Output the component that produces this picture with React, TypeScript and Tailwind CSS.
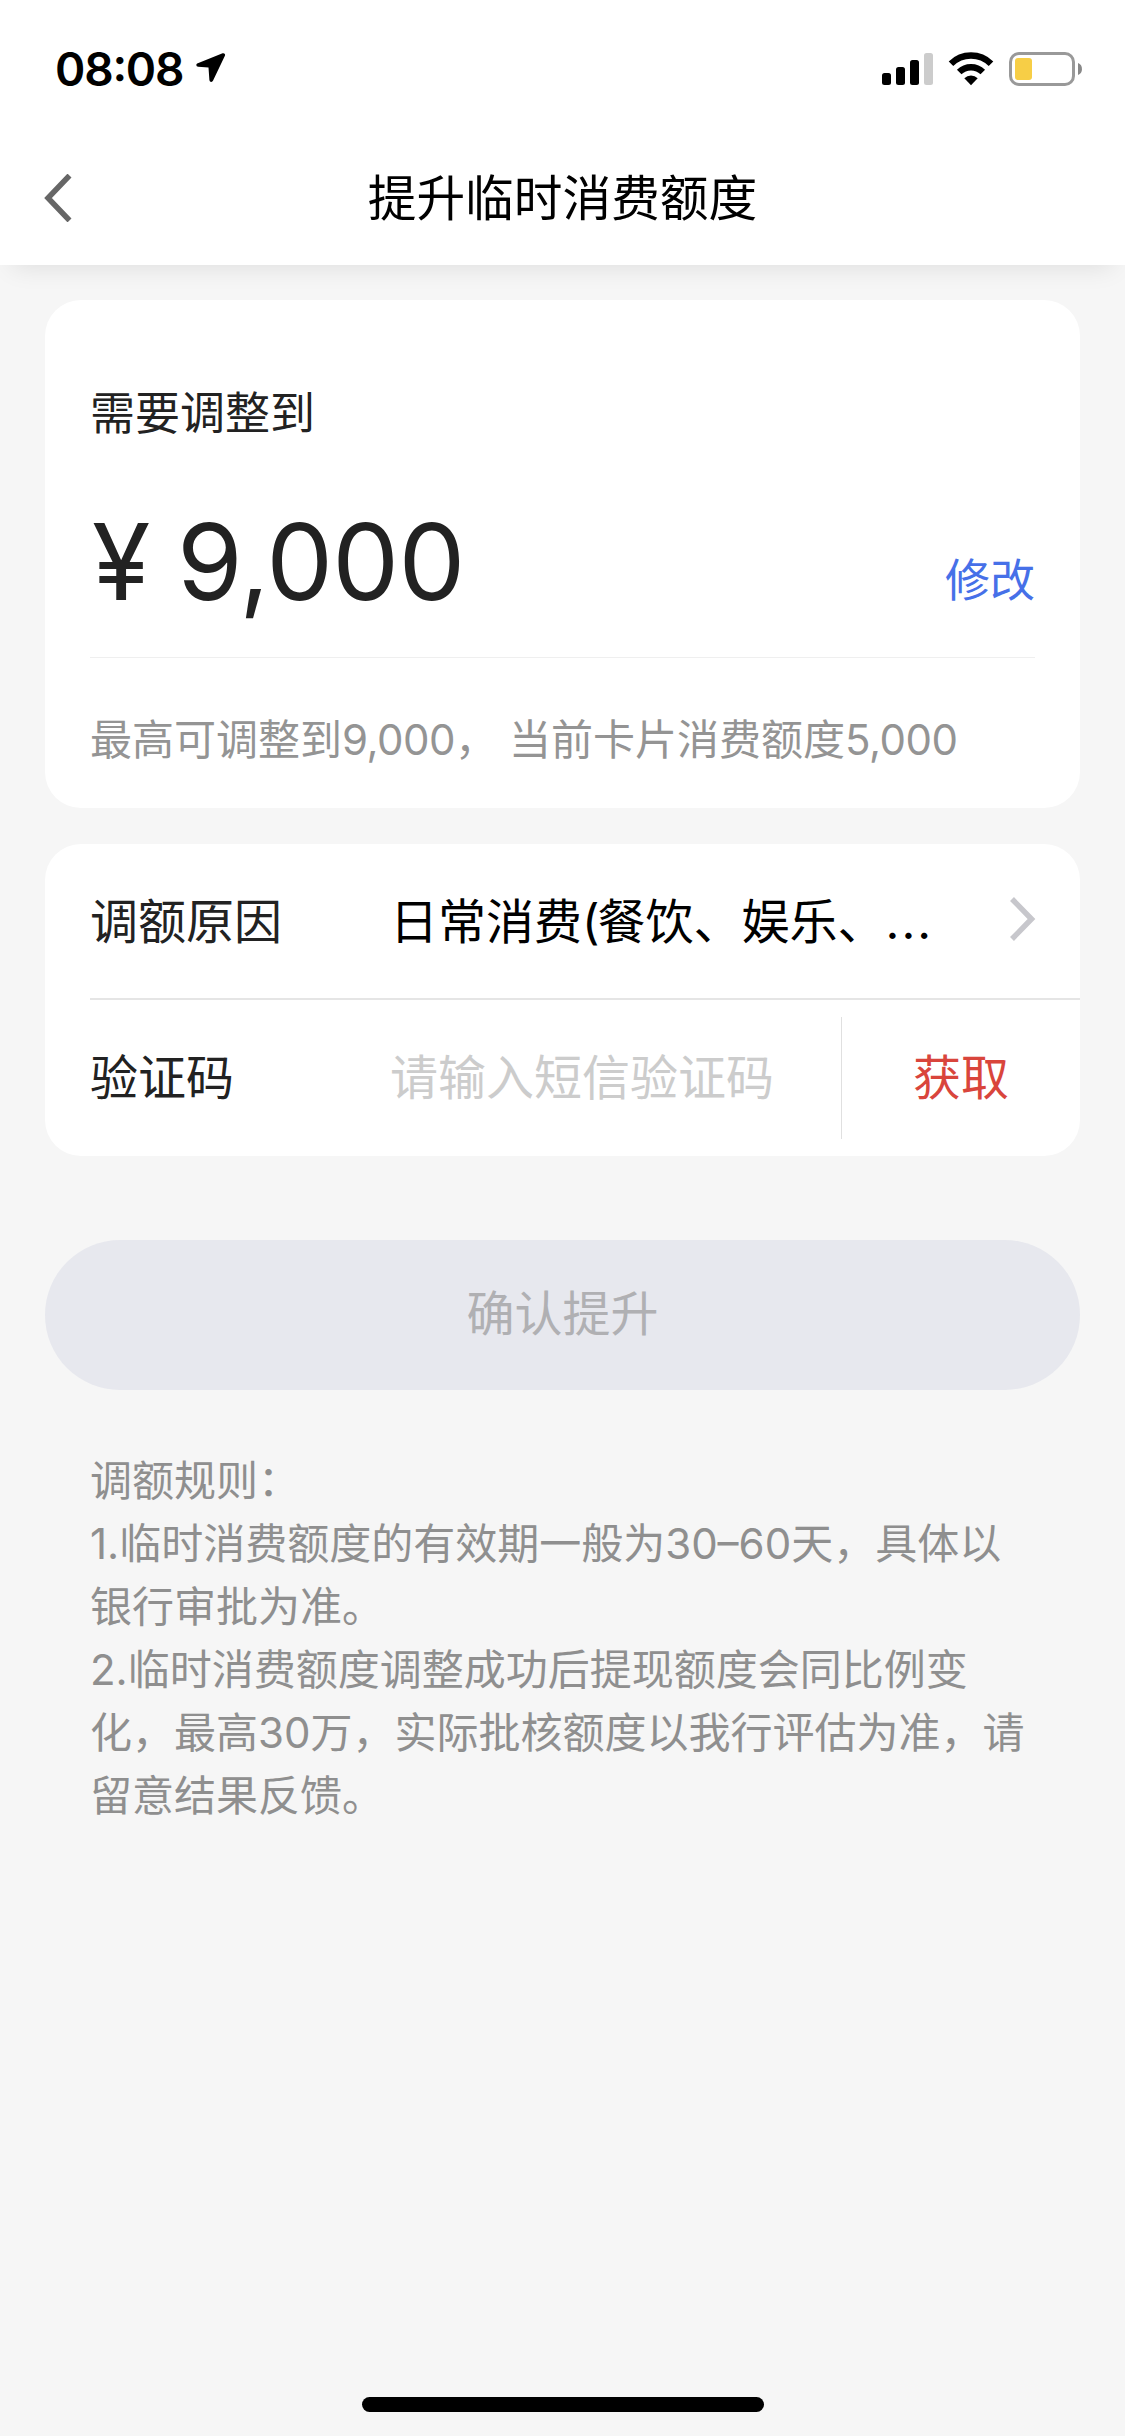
import React from "react";

const LocationIcon = () => (
  <svg className="h-[31px] w-[30px]" viewBox="0 0 30 31">
    <path
      d="M26.600 1.300 1.800 11.200c-2.200.9-1.800 3.400.4 3.600l10.300.6.900 12.600c.2 2.300 2.800 2.700 3.700.6L28.900 3.700c.7-1.600-.7-3-2.300-2.400Z"
      fill="#000"
    />
  </svg>
);

const SignalIcon = () => (
  <svg className="h-[34px] w-[52px]" viewBox="0 0 52 34">
    <rect x="0" y="21" width="9" height="12" rx="2.500" />
    <rect x="14" y="15" width="9" height="18" rx="2.500" />
    <rect x="28" y="8" width="9" height="25" rx="2.500" />
    <rect x="42" y="1" width="9" height="32" rx="2.500" fill="#ccc" />
  </svg>
);

const WifiIcon = () => (
  <svg className="h-[34px] w-[46px]" viewBox="0 0 46 34">
    <path
      d="M3 11.800a28.500 28.500 0 0 1 40 0M11.200 20a17 17 0 0 1 23.600 0"
      fill="none"
      stroke="#000"
      strokeWidth="6.500"
    />
    <path d="M16.300 26.200a9.800 9.800 0 0 1 13.400 0L23 33.200Z" />
  </svg>
);

const BatteryIcon = () => (
  <svg className="h-[34px] w-[74px]" viewBox="0 0 74 34">
    <rect
      x="1.500"
      y="1.500"
      width="63"
      height="31"
      rx="8.500"
      fill="none"
      stroke="#999"
      strokeWidth="3"
    />
    <rect x="6" y="6" width="17" height="22" rx="3" fill="#f7ce46" />
    <path d="M69 11c5.300 1.500 5.300 10.500 0 12Z" fill="#888" />
  </svg>
);

const StatusBar = () => (
  <div className="flex h-[132px] items-start justify-between pl-[55px] pr-[42px] pt-[52px]">
    <div className="flex items-start">
      <span className="w-[141px] text-[46px] font-semibold leading-[34px] tracking-[-1.2px] text-black [font-feature-settings:'case']">
        08:08
      </span>
      <LocationIcon />
    </div>
    <div className="flex items-center">
      <SignalIcon />
      <div className="ml-[14px] mr-[15px]">
        <WifiIcon />
      </div>
      <BatteryIcon />
    </div>
  </div>
);

const Header = () => (
  <header className="z-10 h-[265px] bg-white shadow-[0_14px_24px_-12px_rgba(0,0,0,0.1)]">
    <StatusBar />
    <div className="grid h-[133px] grid-cols-[200px_1fr_200px] items-center">
      <button className="-mt-[2px] pl-[43px]">
        <svg className="h-[48px] w-[30px]" viewBox="0 0 30 48">
          <path
            d="M26.500 1.500 5 24l21.500 22.500"
            fill="none"
            stroke="#666"
            strokeWidth="5.500"
          />
        </svg>
      </button>
      <h1 className="pt-px text-center text-[48.700px] leading-[60px] text-black">
        提升临时消费额度
      </h1>
    </div>
  </header>
);

const AmountCard = () => (
  <section className="h-[508px] rounded-[36px] bg-white px-[45px] pt-[81px]">
    <h2 className="text-[45px] leading-[66px]">需要调整到</h2>
    <div className="flex h-[211px] items-end justify-between border-b border-[#efefef]">
      <div className="flex pb-[30px] text-[106px] leading-[130px]">
        <span className="w-[87px] pl-[2px]">¥</span>
        <span className="tracking-[-0.8px]">9,000</span>
      </div>
      <button className="pb-[43px] text-[45px] leading-[66px] text-[#4670e8]">
        修改
      </button>
    </div>
    <p className="mt-[50px] whitespace-nowrap text-[42px] leading-[63px] text-[#949494]">
      最高可调整到<span className="tracking-[-0.5px]">9,000</span>，
      <span className="pl-[12px]">当前卡片消费额度</span>
      <span className="tracking-[-0.5px]">5,000</span>
    </p>
  </section>
);

const FormCard = () => (
  <section className="mt-9 h-[312px] rounded-[36px] bg-white pl-[45px] text-[48px]">
    <div className="flex h-[156px] items-center border-b-2 border-[#e5e5e5] pr-[44px]">
      <span className="w-[300px] pt-[2px]">调额原因</span>
      <span className="w-[560px] whitespace-nowrap pt-[2px] text-black">
        日常消费
        <span className="tracking-[-2px]">(</span>
        餐饮、娱乐、
        <span className="tracking-[2px]">...</span>
      </span>
      <svg className="-mt-1 ml-auto h-[46px] w-[28px]" viewBox="0 0 28 46">
        <path
          d="M4 3l19.500 20L4 43"
          fill="none"
          stroke="#c7c7cc"
          strokeWidth="5.500"
        />
      </svg>
    </div>
    <div className="flex h-[156px] items-center">
      <span className="w-[300px]">验证码</span>
      <span className="w-[451px] text-[#ccc]">请输入短信验证码</span>
      <div className="h-[122px] w-px bg-[#e0e0e0]" />
      <button className="flex-1 text-[#d9453c]">获取</button>
    </div>
  </section>
);

const rules = [
  "调额规则：",
  "1.临时消费额度的有效期一般为30–60天，具体以",
  "银行审批为准。",
  "2.临时消费额度调整成功后提现额度会同比例变",
  "化，最高30万，实际批核额度以我行评估为准，请",
  "留意结果反馈。",
];

const App = () => {
  return (
    <div className="flex h-[2436px] w-[1125px] flex-col bg-[#f6f6f6] font-['Inter','Noto_Sans_CJK_SC',sans-serif] text-[#222]">
      <Header />
      <main className="flex-1 px-[45px] pt-[35px]">
        <AmountCard />
        <FormCard />
        <button className="mt-[84px] h-[150px] w-full rounded-full bg-[#e7e8ee] pb-[2px] text-[48px] text-[#b0b0b3]">
          确认提升
        </button>
        <div className="mt-[59px] px-[45px] text-[42px] leading-[63px] text-[#8f8f8f]">
          {rules.map((r) => (
            <p key={r} className="whitespace-nowrap">
              {r}
            </p>
          ))}
        </div>
      </main>
      <div className="mx-auto mb-6 h-[15px] w-[402px] rounded-full bg-black" />
    </div>
  );
};

export default App;
